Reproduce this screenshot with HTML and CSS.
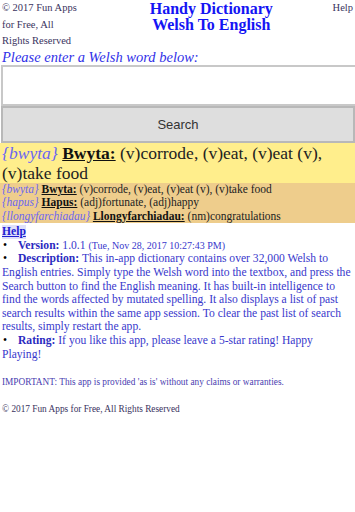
FILE: index.html
```html
<!DOCTYPE html>
<html>
<head>
<meta charset="utf-8">
<link rel="stylesheet" href="styles.css">
</head>
<body>
<div class="header">
  <div class="copy">© 2017 Fun Apps for Free, All Rights Reserved</div>
  <div class="title">Handy Dictionary<br>Welsh To English</div>
  <div class="help-top">Help</div>
</div>
<div class="prompt">Please enter a Welsh word below:</div>
<input class="word" type="text">
<button class="search">Search</button>
<div class="result">
  <span class="key">{bwyta}</span> <span class="hw">Bwyta:</span> (v)corrode, (v)eat, (v)eat (v), (v)take food
</div>
<div class="history">
  <div class="row"><span class="key">{bwyta}</span> <span class="hw">Bwyta:</span> (v)corrode, (v)eat, (v)eat (v), (v)take food</div>
  <div class="row"><span class="key">{hapus}</span> <span class="hw">Hapus:</span> (adj)fortunate, (adj)happy</div>
  <div class="row"><span class="key">{llongyfarchiadau}</span> <span class="hw">Llongyfarchiadau:</span> (nm)congratulations</div>
</div>
<div class="helpsec">
  <a class="helplink" href="#">Help</a>
  <ul class="info">
    <li><b>Version:</b> 1.0.1 <span class="date">(Tue, Nov 28, 2017 10:27:43 PM)</span></li>
    <li><b>Description:</b> This in-app dictionary contains over 32,000 Welsh to English entries. Simply type the Welsh word into the textbox, and press the Search button to find the English meaning. It has built-in intelligence to find the words affected by mutated spelling. It also displays a list of past search results within the same app session. To clear the past list of search results, simply restart the app.</li>
    <li><b>Rating:</b> If you like this app, please leave a 5-star rating! Happy Playing!</li>
  </ul>
  <p class="important">IMPORTANT: This app is provided 'as is' without any claims or warranties.</p>
  <p class="foot">© 2017 Fun Apps for Free, All Rights Reserved</p>
</div>
</body>
</html>
```
FILE: styles.css
```css
html, body {
  margin: 0;
  padding: 0;
  background: #fff;
}
body {
  padding: 0 0 0 2px;
  overflow-x: hidden;
  font-family: "Liberation Serif", "Times New Roman", serif;
}
.header {
  display: flex;
  align-items: flex-start;
  height: 49px;
}
.copy {
  width: 76px;
  font-size: 10.5px;
  line-height: 16.5px;
  color: #3a3360;
}
.title {
  flex: 1;
  text-align: center;
  font-family: "Liberation Serif", "Times New Roman", serif;
  font-weight: bold;
  color: #1414f4;
  font-size: 16px;
  line-height: 16px;
  padding-top: 1px;
  padding-left: 12px;
}
.help-top {
  font-size: 10.5px;
  line-height: 16.5px;
  color: #3a3360;
  padding-right: 2px;
}
.prompt {
  font-style: italic;
  color: #3030e8;
  font-size: 14.5px;
  line-height: 16px;
}
.word {
  display: block;
  box-sizing: border-box;
  width: 370px;
  height: 41px;
  margin: 0 0 0 -1px;
  border: 2px solid #c8c8c8;
  border-right: none;
  background: #fff;
  padding: 0;
}
.search {
  display: block;
  box-sizing: border-box;
  width: 354px;
  height: 37px;
  margin: 0 0 0 -1px;
  background: #dedede;
  border: 2px solid #b8b8b8;
  border-radius: 0;
  font-family: "Liberation Sans", Arial, sans-serif;
  font-size: 13px;
  color: #333;
}
.result {
  background: #ffee8c;
  margin-left: -2px;
  padding-left: 2px;
  font-size: 17.5px;
  line-height: 20px;
  color: #222;
}
.key {
  font-style: italic;
  color: #6a66f2;
}
.hw {
  font-family: "Liberation Serif", "Times New Roman", serif;
  font-weight: bold;
  text-decoration: underline;
  color: #111;
}
.history {
  background: #eecd8c;
  margin-left: -2px;
  padding: 0 0 0 2px;
  font-size: 11.5px;
  line-height: 13.4px;
  color: #222;
}
.helpsec {
  color: #3838cc;
  font-size: 11.6px;
  line-height: 13.6px;
  padding: 2px 4px 0 0;
}
.helplink {
  display: inline-block;
  font-weight: bold;
  color: #2020d0;
  text-decoration: underline;
  background: #dfe0fa;
}
.info {
  margin: 0;
  padding: 0;
  list-style: none;
}
.info li::before {
  content: "•";
  color: #000;
  display: inline-block;
  width: 15px;
  padding-left: 1px;
}
.info b {
  color: #2a2ac0;
}
.date {
  font-size: 10px;
}
.important {
  font-size: 9.3px;
  margin: 15px 0 0;
  line-height: 12px;
  color: #4a40b0;
}
.foot {
  font-size: 9.3px;
  margin: 15px 0 0;
  line-height: 12px;
  color: #3a3360;
}
```
